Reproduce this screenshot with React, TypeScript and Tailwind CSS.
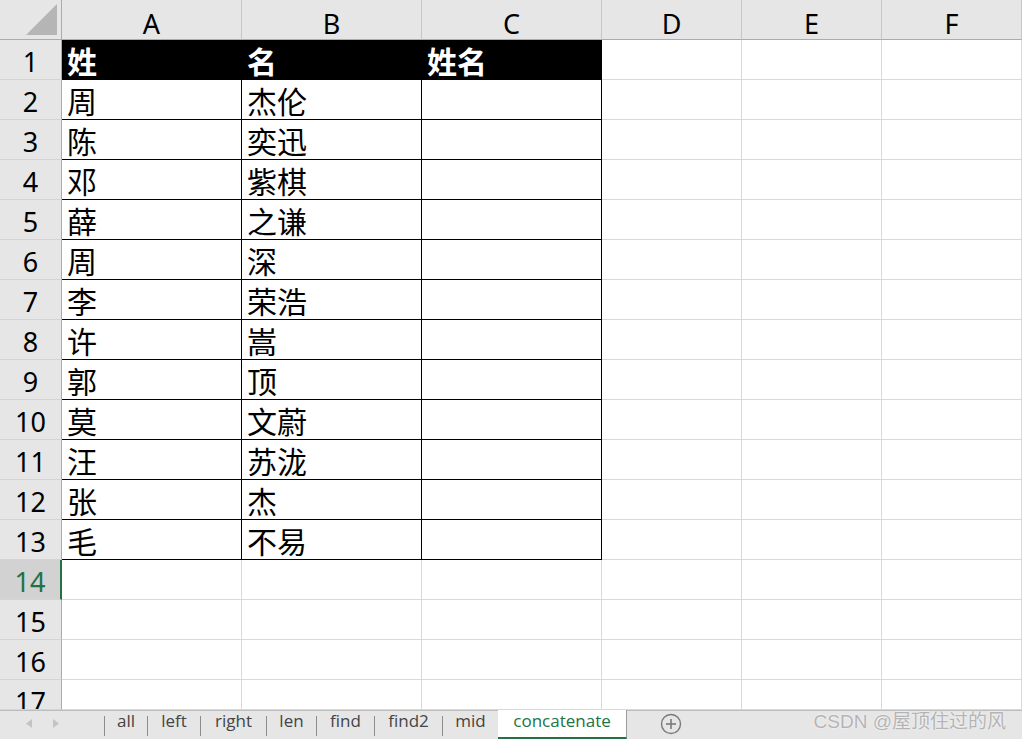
import React from "react";

const colA = ["姓", "周", "陈", "邓", "薛", "周", "李", "许", "郭", "莫", "汪", "张", "毛"];
const colB = ["名", "杰伦", "奕迅", "紫棋", "之谦", "深", "荣浩", "嵩", "顶", "文蔚", "苏泷", "杰", "不易"];
const colC = ["姓名"];
const letters = ["A", "B", "C", "D", "E", "F"];
const widths = ["w-[180px]", "w-[180px]", "w-[180px]", "w-[140px]", "w-[140px]", "w-[140px]"];

const tabs: { name: string; w: string }[] = [
  { name: "all", w: "w-[43px]" },
  { name: "left", w: "w-[53px]" },
  { name: "right", w: "w-[66px]" },
  { name: "len", w: "w-[50px]" },
  { name: "find", w: "w-[58px]" },
  { name: "find2", w: "w-[68px]" },
  { name: "mid", w: "w-[56px]" },
];

const font = { fontFamily: '"Noto Sans", "Noto Sans CJK SC", sans-serif' };

function Row({ r }: { r: number }) {
  const last = r === 17;
  const h = last ? "h-[30px]" : "h-[40px]";
  const selected = r === 14;
  return (
    <div className={`flex ${h}`}>
      <div
        className={`w-[62px] shrink-0 flex items-center justify-center border-b border-[#d4d4d4] ${
          selected
            ? "bg-[#d2d2d2] text-[#217346] border-r-2 border-r-[#217346]"
            : "bg-[#e6e6e6] text-black border-r border-r-[#ababab]"
        } text-[27px] leading-none pt-[3px] ${last ? "items-start pt-[8px] overflow-hidden" : ""}`}
      >
        {r}
      </div>
      {letters.map((l, ci) => {
        const inTable = r <= 13 && ci <= 2;
        const header = r === 1 && ci <= 2;
        let text = "";
        if (ci === 0) text = colA[r - 1] ?? "";
        if (ci === 1) text = colB[r - 1] ?? "";
        if (ci === 2) text = colC[r - 1] ?? "";
        if (r > 13) text = "";
        return (
          <div
            key={l}
            className={`${widths[ci]} shrink-0 flex items-center pl-[5px] pt-[4px] text-[30px] leading-none whitespace-nowrap overflow-hidden ${
              inTable ? "border-r border-b border-black" : "border-r border-b border-[#d9d9d9]"
            } ${header ? "bg-black text-white font-bold" : "bg-white text-black"}`}
          >
            {text}
          </div>
        );
      })}
    </div>
  );
}

export default function App() {
  const rows = Array.from({ length: 17 }, (_, i) => i + 1);
  return (
    <div className="w-[1022px] h-[739px] overflow-hidden bg-white flex flex-col" style={font}>
      {/* column header */}
      <div className="flex h-[40px] shrink-0">
        <div className="w-[62px] shrink-0 bg-[#e6e6e6] border-r border-b border-[#ababab] flex items-start justify-end pr-[3px] pt-[4px]">
          <svg width="32" height="32" viewBox="0 0 32 32">
            <polygon points="0,31 31,31 31,0" fill="#b5b5b5" />
          </svg>
        </div>
        {letters.map((l, i) => (
          <div
            key={l}
            className={`${widths[i]} shrink-0 bg-[#e6e6e6] border-r border-r-[#c6c6c6] border-b border-b-[#ababab] flex items-center justify-center pt-[7px] text-[27px] leading-none text-black`}
          >
            {l}
          </div>
        ))}
      </div>
      {rows.map((r) => (
        <Row key={r} r={r} />
      ))}
      {/* tab bar */}
      <div className="flex h-[29px] shrink-0 bg-[#e6e6e6] text-[17px] leading-none text-[#444]" style={{ fontFamily: '"Open Sans", "Noto Sans", sans-serif' }}>
        <div className="w-[104px] shrink-0 border-t border-[#bdbdbd] flex items-center gap-[20px] pl-[26px] pb-[4px]">
          <svg width="7" height="9" viewBox="0 0 7 9"><polygon points="6,0 6,9 0,4.5" fill="#c4c4c4" /></svg>
          <svg width="7" height="9" viewBox="0 0 7 9"><polygon points="0,0 0,9 6,4.5" fill="#c4c4c4" /></svg>
        </div>
        {tabs.map((t) => (
          <div key={t.name} className={`${t.w} shrink-0 border-t border-[#bdbdbd] flex items-center`}>
            <div className="w-px h-[20px] bg-[#8c8c8c] shrink-0 mt-[1px]" />
            <div className="flex-1 text-center pb-[9px]">{t.name}</div>
          </div>
        ))}
        <div className="w-[129px] shrink-0 bg-white border-r border-[#9a9a9a] border-b-2 border-b-[#217346] flex items-center justify-center text-[#217346] pb-[7px]">
          concatenate
        </div>
        <div className="flex-1 border-t border-[#bdbdbd] flex items-center">
          <div className="w-[86px] flex justify-center pl-[2px] pb-[2px]">
            <svg width="22" height="22" viewBox="0 0 22 22">
              <circle cx="11" cy="11" r="9.5" fill="none" stroke="#7a7a7a" strokeWidth="1.4" />
              <line x1="11" y1="6" x2="11" y2="16" stroke="#7a7a7a" strokeWidth="1.6" />
              <line x1="6" y1="11" x2="16" y2="11" stroke="#7a7a7a" strokeWidth="1.6" />
            </svg>
          </div>
          <div
            className="ml-auto mr-[16px] pb-[8px] text-[19px] text-[#b4b4b4] whitespace-nowrap"
            style={{ fontFamily: '"Liberation Sans", "Noto Sans CJK SC", sans-serif', textShadow: "0 0 2px #fff" }}
          >
            CSDN @屋顶住过的风
          </div>
        </div>
      </div>
    </div>
  );
}
